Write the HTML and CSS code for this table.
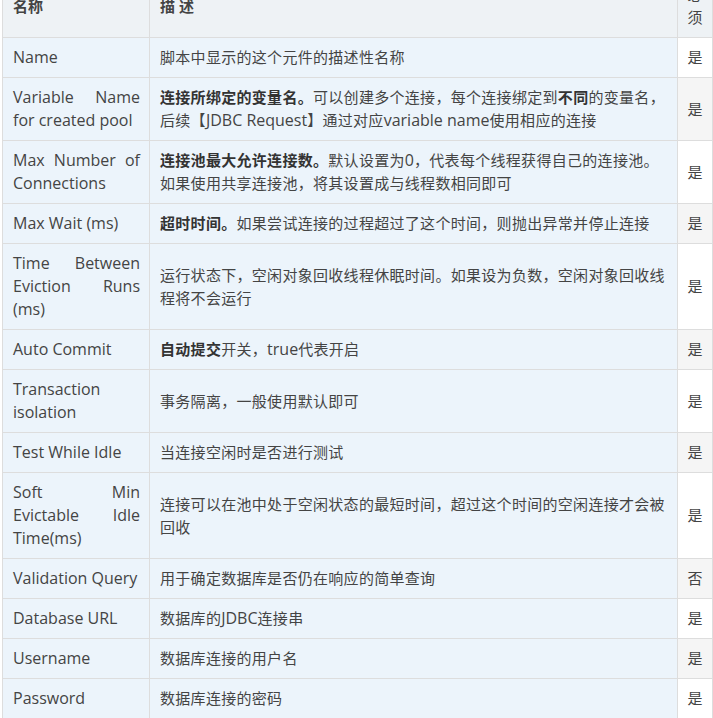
FILE: index.html
```html
<!DOCTYPE html>
<html lang="zh-CN">
<head>
<meta charset="utf-8">
<title>JDBC Connection Configuration</title>
<link rel="stylesheet" href="styles.css">
</head>
<body>
<table class="params">
  <colgroup>
    <col class="c-name">
    <col class="c-desc">
    <col class="c-req">
  </colgroup>
  <thead>
    <tr>
      <th>名称</th>
      <th>描 述</th>
      <th class="req">必须</th>
    </tr>
  </thead>
  <tbody>
    <tr><td>Name</td><td class="desc">脚本中显示的这个元件的描述性名称</td><td class="req">是</td></tr>
    <tr><td>Variable Name for created pool</td><td class="desc"><b>连接所绑定的变量名。</b>可以创建多个连接，每个连接绑定到<b>不同</b>的变量名，后续【<span class="en">JDBC Request</span>】通过对应<span class="en">variable name</span>使用相应的连接</td><td class="req">是</td></tr>
    <tr><td>Max Number of Connections</td><td class="desc"><b>连接池最大允许连接数。</b>默认设置为<span class="en">0</span>，代表每个线程获得自己的连接池。如果使用共享连接池，将其设置成与线程数相同即可</td><td class="req">是</td></tr>
    <tr><td>Max Wait (ms)</td><td class="desc"><b>超时时间。</b>如果尝试连接的过程超过了这个时间，则抛出异常并停止连接</td><td class="req">是</td></tr>
    <tr><td>Time Between Eviction Runs (ms)</td><td class="desc">运行状态下，空闲对象回收线程休眠时间。如果设为负数，空闲对象回收线程将不会运行</td><td class="req">是</td></tr>
    <tr><td>Auto Commit</td><td class="desc"><b>自动提交</b>开关，<span class="en">true</span>代表开启</td><td class="req">是</td></tr>
    <tr><td>Transaction isolation</td><td class="desc">事务隔离，一般使用默认即可</td><td class="req">是</td></tr>
    <tr><td>Test While Idle</td><td class="desc">当连接空闲时是否进行测试</td><td class="req">是</td></tr>
    <tr><td>Soft Min Evictable Idle Time(ms)</td><td class="desc">连接可以在池中处于空闲状态的最短时间，超过这个时间的空闲连接才会被回收</td><td class="req">是</td></tr>
    <tr><td>Validation Query</td><td class="desc">用于确定数据库是否仍在响应的简单查询</td><td class="req">否</td></tr>
    <tr><td>Database URL</td><td class="desc">数据库的<span class="en">JDBC</span>连接串</td><td class="req">是</td></tr>
    <tr><td>Username</td><td class="desc">数据库连接的用户名</td><td class="req">是</td></tr>
    <tr><td>Password</td><td class="desc">数据库连接的密码</td><td class="req">是</td></tr>
  </tbody>
</table>
</body>
</html>
```
FILE: styles.css
```css
html, body {
  margin: 0;
  padding: 0;
  background: #ffffff;
}

body {
  font-family: "Open Sans", "Noto Sans CJK SC", sans-serif;
  font-size: 15px;
  line-height: 23px;
  color: #444444;
}

.params {
  border-collapse: collapse;
  table-layout: fixed;
  width: 710px;
  margin: -26px 0 0 2px;
}

.c-name { width: 147px; }
.c-desc { width: 528px; }
.c-req { width: 35px; }

.params th,
.params td {
  border: 1px solid #dddddd;
  padding: 8px 9px 8px 10px;
  vertical-align: middle;
  text-align: left;
  word-break: break-all;
}

.params th {
  background: #eef2f5;
  font-weight: bold;
  color: #444444;
}

.params th.req {
  font-weight: normal;
  padding: 8px 9px;
  text-align: center;
}

.params td {
  background: #ecf4fb;
}

.params td:first-child {
  font-size: 16px;
  text-align: justify;
  word-break: normal;
}

.params td.desc {
  letter-spacing: 0.3px;
}

.params .en {
  font-size: 16px;
  letter-spacing: 0;
}

.params td.req {
  background: #ffffff;
  text-align: center;
  padding: 8px 9px;
}

.params tbody tr:nth-child(even) td.req {
  background: #f5f5f5;
}

.params b {
  font-weight: bold;
  color: #333333;
}
```
